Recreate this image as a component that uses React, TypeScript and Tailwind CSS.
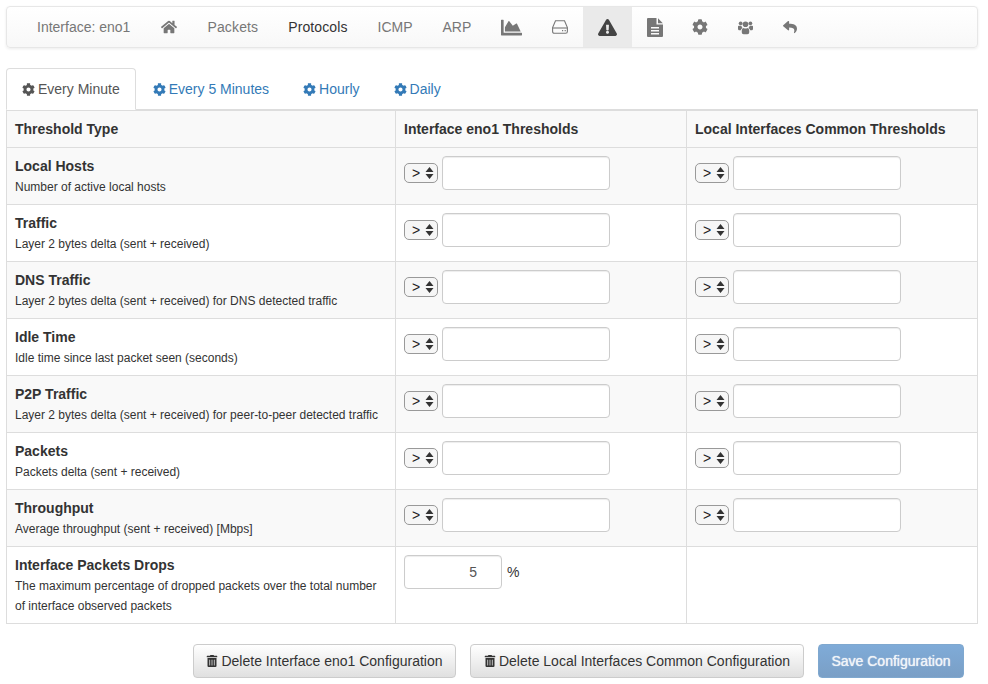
import { FaHome, FaChartArea, FaExclamationTriangle, FaCog, FaReply, FaTrashAlt } from "react-icons/fa"

const rows = [
    { title: "Local Hosts", description: "Number of active local hosts" },
    { title: "Traffic", description: "Layer 2 bytes delta (sent + received)" },
    { title: "DNS Traffic", description: "Layer 2 bytes delta (sent + received) for DNS detected traffic" },
    { title: "Idle Time", description: "Idle time since last packet seen (seconds)" },
    { title: "P2P Traffic", description: "Layer 2 bytes delta (sent + received) for peer-to-peer detected traffic" },
    { title: "Packets", description: "Packets delta (sent + received)" },
    { title: "Throughput", description: "Average throughput (sent + received) [Mbps]" },
]

function NavText({ label, className }: { label: string; className: string }) {
    return <span className={`px-[15px] leading-[40px] ${className}`}>{label}</span>
}

function NavIcon({ children, active }: { children: React.ReactNode; active?: boolean }) {
    return (
        <span className={`flex h-[40px] items-center justify-center px-[15px] ${active ? "bg-[#eaeaea] text-[#444]" : "text-[#777]"}`}>
            {children}
        </span>
    )
}

function HddIcon() {
    return (
        <svg width="16" height="14" viewBox="0 0 16 14" fill="none" stroke="currentColor" strokeWidth="1.1">
            <path d="M3.5 0.7 H12.5 L15.4 7.5 V11.5 Q15.4 13.3 13.6 13.3 H2.4 Q0.6 13.3 0.6 11.5 V7.5 Z" />
            <path d="M0.8 8 H15.2" />
            <path d="M10 10.7 H11.2 M12.6 10.7 H13.8" strokeWidth="1.3" />
        </svg>
    )
}

function FileIcon() {
    return (
        <svg width="16" height="19" viewBox="0 0 16 19" fill="currentColor" className="-mr-[1px]">
            <path fillRule="evenodd" d="M1 0 H9.5 V6.5 H16 V18 Q16 19 15 19 H1 Q0 19 0 18 V1 Q0 0 1 0 Z M4 9 V10.5 H12 V9 Z M4 12 V13.5 H12 V12 Z M4 15 V16.5 H12 V15 Z" />
            <path d="M11 0.3 L15.8 5.2 H11 Z" />
        </svg>
    )
}

function UsersIcon() {
    return (
        <svg width="15" height="15" viewBox="0 0 16 15" fill="currentColor">
            <circle cx="2.8" cy="3" r="2" />
            <circle cx="13.2" cy="3" r="2" />
            <circle cx="8" cy="4" r="3" />
            <path d="M0 6.5 Q0 5.6 1 5.6 H3.6 Q3.9 7 4.8 8 Q3.3 8.7 3 10.4 H1 Q0 10.4 0 9.2 Z" />
            <path d="M16 6.5 Q16 5.6 15 5.6 H12.4 Q12.1 7 11.2 8 Q12.7 8.7 13 10.4 H15 Q16 10.4 16 9.2 Z" />
            <path d="M4 11 Q4 8.2 6 8 Q8 9.3 10 8 Q12 8.2 12 11 V12.6 Q12 14.6 10 14.6 H6 Q4 14.6 4 12.6 Z" />
        </svg>
    )
}

function ThresholdInput() {
    return (
        <div className="flex items-center gap-[4px]">
            <span className="flex h-[20px] w-[34px] items-center justify-between rounded-[5px] border border-[#999] bg-[#f6f6f6] pl-[7px] pr-[3px] text-[14px] text-[#222]">
                <span>&gt;</span>
                <svg width="9" height="14" viewBox="0 0 9 14" className="text-[#333]">
                    <path d="M4.5 1 L8.5 6 L0.5 6 Z M4.5 13 L0.5 8 L8.5 8 Z" fill="currentColor" />
                </svg>
            </span>
            <span className="block h-[34px] w-[168px] rounded-[4px] border border-[#ccc] bg-white shadow-[inset_0_1px_1px_rgba(0,0,0,0.075)]" />
        </div>
    )
}

function Tab({ label, active }: { label: string; active?: boolean }) {
    return (
        <span
            className={`-mb-[1px] flex h-[42px] items-center gap-[3px] rounded-t-[4px] border px-[15px] ${
                active ? "mr-[1px] border-[#ddd] border-b-white bg-white text-[#555]" : "mr-[2px] border-transparent text-[#337ab7]"
            }`}
        >
            <FaCog className="w-[13px] text-[13px]" />
            {label}
        </span>
    )
}

function DeleteButton({ label, width }: { label: string; width: string }) {
    return (
        <button className={`flex h-[34px] items-center justify-center gap-[3px] rounded-[4px] border border-[#ccc] bg-gradient-to-b from-white to-[#e0e0e0] text-[14px] text-[#333] ${width}`}>
            <FaTrashAlt className="text-[12px]" />
            {label}
        </button>
    )
}

export default function App() {
    return (
        <div className="h-[684px] w-[988px] overflow-hidden bg-white px-[6px] pt-[6px] text-[14px] text-[#333] font-['Liberation_Sans',Arial,sans-serif]">
            {/* top navbar */}
            <div className="flex h-[42px] w-[972px] items-center rounded-[4px] border border-[#e7e7e7] bg-gradient-to-b from-white to-[#f8f8f8] pl-[15px] shadow-[0_1px_3px_rgba(0,0,0,0.08)]">
                <NavText label="Interface: eno1" className="text-[#777]" />
                <span className="flex h-[40px] items-center pl-[16px] pr-[15px] text-[#777]"><FaHome className="text-[16px]" /></span>
                <NavText label="Packets" className="text-[#777] tracking-[0.15px]" />
                <NavText label="Protocols" className="text-[#333] tracking-[0.1px]" />
                <NavText label="ICMP" className="text-[#777]" />
                <NavText label="ARP" className="text-[#777]" />
                <NavIcon><FaChartArea className="text-[21px]" /></NavIcon>
                <NavIcon><HddIcon /></NavIcon>
                <NavIcon active><FaExclamationTriangle className="text-[19px]" /></NavIcon>
                <NavIcon><FileIcon /></NavIcon>
                <NavIcon><FaCog className="text-[16px]" /></NavIcon>
                <NavIcon><UsersIcon /></NavIcon>
                <NavIcon><FaReply className="text-[14px]" /></NavIcon>
            </div>

            {/* tabs */}
            <div className="mt-[20px] flex w-[972px] border-b border-[#ddd]">
                <Tab label="Every Minute" active />
                <Tab label="Every 5 Minutes" />
                <Tab label="Hourly" />
                <Tab label="Daily" />
            </div>

            <table className="w-[971px] table-fixed border-collapse border border-[#ddd]">
                <colgroup>
                    <col className="w-[389px]" />
                    <col className="w-[291px]" />
                    <col className="w-[291px]" />
                </colgroup>
                <thead>
                    <tr className="h-[37px] bg-[#f9f9f9] border-b border-[#ddd]">
                        <th className="border-r border-[#ddd] px-[8px] text-left font-bold">Threshold Type</th>
                        <th className="border-r border-[#ddd] px-[8px] text-left font-bold">Interface eno1 Thresholds</th>
                        <th className="px-[8px] text-left font-bold">Local Interfaces Common Thresholds</th>
                    </tr>
                </thead>
                <tbody>
                    {rows.map((row, i) => (
                        <tr key={row.title} className={`h-[57px] border-b border-[#ddd] ${i % 2 === 0 ? "bg-[#f9f9f9]" : "bg-white"}`}>
                            <td className="border-r border-[#ddd] px-[8px] align-middle">
                                <div className="font-bold leading-[20px]">{row.title}</div>
                                <div className="mt-[1px] text-[12px] leading-[20px]">{row.description}</div>
                            </td>
                            <td className="border-r border-[#ddd] px-[8px] pt-[8px] align-top"><ThresholdInput /></td>
                            <td className="px-[8px] pt-[8px] align-top"><ThresholdInput /></td>
                        </tr>
                    ))}
                    <tr className="h-[77px] border-b border-[#ddd]">
                        <td className="border-r border-[#ddd] px-[8px] align-middle">
                            <div className="font-bold leading-[20px]">Interface Packets Drops</div>
                            <div className="mt-[1px] text-[12px] leading-[20px]">
                                The maximum percentage of dropped packets over the total number of interface observed packets
                            </div>
                        </td>
                        <td className="border-r border-[#ddd] px-[8px] pt-[8px] align-top">
                            <div className="flex items-center gap-[5px]">
                                <span className="flex h-[34px] w-[98px] items-center justify-end rounded-[4px] border border-[#ccc] bg-white pr-[24px] shadow-[inset_0_1px_1px_rgba(0,0,0,0.075)] text-[#555]">5</span>
                                <span>%</span>
                            </div>
                        </td>
                        <td />
                    </tr>
                </tbody>
            </table>

            {/* bottom buttons */}
            <div className="mt-[20px] flex w-[958px] justify-end gap-[14px]">
                <DeleteButton label="Delete Interface eno1 Configuration" width="w-[263px]" />
                <DeleteButton label="Delete Local Interfaces Common Configuration" width="w-[334px]" />
                <button className="h-[34px] w-[146px] rounded-[4px] border border-[#7fa8cf] bg-gradient-to-b from-[#7fabd8] to-[#7a9fc6] text-[#f0f4f8] [text-shadow:0_0_1px_#fff]">
                    Save Configuration
                </button>
            </div>
        </div>
    )
}
